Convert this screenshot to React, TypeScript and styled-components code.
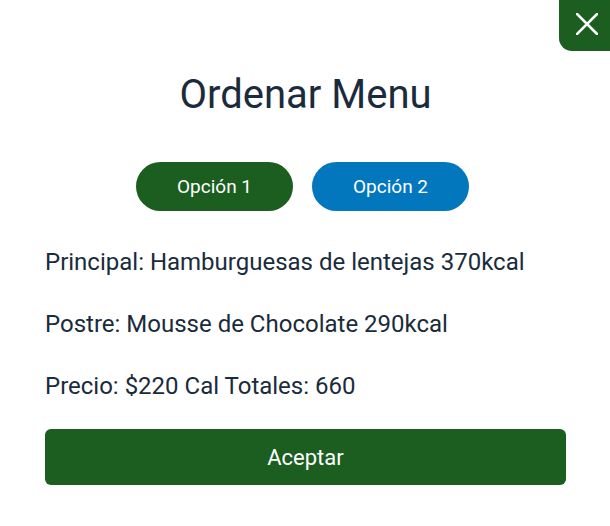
import styled, { createGlobalStyle } from "styled-components"

const GlobalStyle = createGlobalStyle`
  body {
    margin: 0;
    background: #ffffff;
    font-family: Roboto, "Liberation Sans", sans-serif;
  }
`

interface OptionProps {
  $color: string;
}

function App() {
  return (
    <>
      <GlobalStyle />
      <Modal>
        <CloseButton aria-label="Cerrar">
          <svg width="22" height="22" viewBox="0 0 22 22" fill="none">
            <path d="M1 1L21 21M21 1L1 21" stroke="#ffffff" strokeWidth="2.6" strokeLinecap="square" />
          </svg>
        </CloseButton>

        <Title>Ordenar Menu</Title>

        <OptionRow>
          <OptionButton $color="#1b5e20">Opción 1</OptionButton>
          <OptionButton $color="#0277bd">Opción 2</OptionButton>
        </OptionRow>

        <Line>Principal: Hamburguesas de lentejas 370kcal</Line>
        <Line>Postre: Mousse de Chocolate 290kcal</Line>
        <Line>Precio: $220 Cal Totales: 660</Line>

        <AcceptButton>Aceptar</AcceptButton>
      </Modal>
    </>
  )
}

const Modal = styled.div`
  position: relative;
  width: 610px;
  height: 526px;
  box-sizing: border-box;
  padding: 70px 44px 0 45px;
  display: flex;
  flex-direction: column;
  background: #ffffff;
  color: #1a2b3c;
`

const CloseButton = styled.button`
  position: absolute;
  top: 0;
  right: 0;
  width: 51px;
  height: 51px;
  border: none;
  padding: 0;
  background: #1b5e20;
  border-bottom-left-radius: 13px;
  display: flex;
  align-items: center;
  justify-content: center;
  padding-left: 4px;
  padding-bottom: 4px;
  cursor: pointer;
`

const Title = styled.h1`
  margin: 0;
  text-align: center;
  font-size: 40px;
  font-weight: 400;
  line-height: 50px;
  color: #1a2b3c;
`

const OptionRow = styled.div`
  display: flex;
  justify-content: center;
  gap: 19px;
  margin-top: 42px;
  margin-bottom: 20px;
  padding-right: 6px;
`

const OptionButton = styled.button<OptionProps>`
  width: 157px;
  height: 49px;
  border: none;
  border-radius: 25px;
  background: ${(p) => p.$color};
  color: #ffffff;
  font-family: Roboto, "Liberation Sans", sans-serif;
  font-size: 19px;
  cursor: pointer;
`

const Line = styled.p`
  margin: 0;
  font-size: 24px;
  line-height: 62px;
  color: #1a2b3c;
`

const AcceptButton = styled.button`
  margin-top: 12px;
  height: 56px;
  border: none;
  border-radius: 6px;
  background: #1b5e20;
  color: #ffffff;
  font-family: Roboto, "Liberation Sans", sans-serif;
  font-size: 22px;
  cursor: pointer;
`

export default App
